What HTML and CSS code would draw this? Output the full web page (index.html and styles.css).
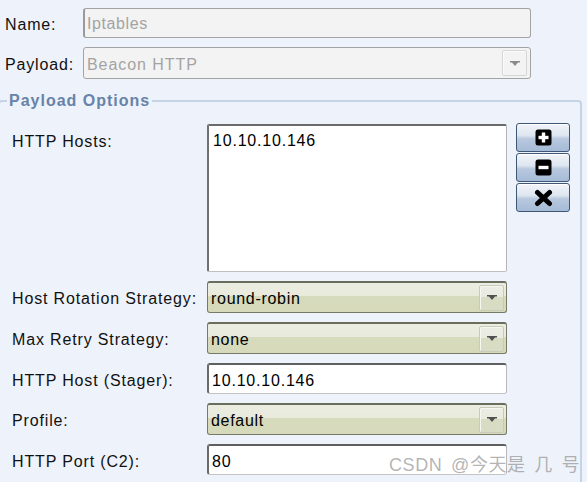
FILE: index.html
```html
<!DOCTYPE html>
<html>
<head>
<meta charset="utf-8">
<link rel="stylesheet" href="styles.css">
</head>
<body>
<div class="top">
  <div class="lbl">Name:</div>
  <div class="field field-off">Iptables</div>
  <div class="lbl">Payload:</div>
  <div class="combo combo-off">
    <span class="val">Beacon HTTP</span>
    <span class="drop"><svg class="arrow" width="10" height="5" viewBox="0 0 10 5"><path d="M0 0h10v1.5H0z M2 1.5h6L5 5z"/></svg></span>
  </div>
</div>
<fieldset class="opts">
  <legend>Payload Options</legend>
  <div class="grid">
    <div class="lbl lbl-top">HTTP Hosts:</div>
    <div class="list">10.10.10.146</div>
    <div class="btns">
      <div class="btn"><svg width="17" height="17" viewBox="0 0 17 17"><rect x="0.5" y="0.5" width="16" height="16" rx="2.5" fill="#000"/><rect x="6.8" y="3.5" width="3.4" height="10" fill="#fff"/><rect x="3.5" y="6.8" width="10" height="3.4" fill="#fff"/></svg></div>
      <div class="btn"><svg width="17" height="17" viewBox="0 0 17 17"><rect x="0.5" y="0.5" width="16" height="16" rx="2.5" fill="#000"/><rect x="3.5" y="6.8" width="10" height="3.4" fill="#fff"/></svg></div>
      <div class="btn"><svg width="19" height="18" viewBox="0 0 19 18"><path d="M3.5 3.5L15.5 14.5M15.5 3.5L3.5 14.5" stroke="#000" stroke-width="5" stroke-linecap="round"/></svg></div>
    </div>

    <div class="lbl">Host Rotation Strategy:</div>
    <div class="combo">
      <span class="val">round-robin</span>
      <span class="drop"><svg class="arrow" width="10" height="5" viewBox="0 0 10 5"><path d="M0 0h10v1.5H0z M2 1.5h6L5 5z"/></svg></span>
    </div>
    <div></div>

    <div class="lbl">Max Retry Strategy:</div>
    <div class="combo">
      <span class="val">none</span>
      <span class="drop"><svg class="arrow" width="10" height="5" viewBox="0 0 10 5"><path d="M0 0h10v1.5H0z M2 1.5h6L5 5z"/></svg></span>
    </div>
    <div></div>

    <div class="lbl">HTTP Host (Stager):</div>
    <div class="field">10.10.10.146</div>
    <div></div>

    <div class="lbl">Profile:</div>
    <div class="combo">
      <span class="val">default</span>
      <span class="drop"><svg class="arrow" width="10" height="5" viewBox="0 0 10 5"><path d="M0 0h10v1.5H0z M2 1.5h6L5 5z"/></svg></span>
    </div>
    <div></div>

    <div class="lbl">HTTP Port (C2):</div>
    <div class="field">80</div>
    <div></div>
  </div>
</fieldset>
<div class="watermark">CSDN @今天是 几 号</div>
</body>
</html>
```

FILE: styles.css
```css
html, body {
  margin: 0;
  padding: 0;
  overflow: hidden;
  height: 100%;
}
body {
  background: #eef2fa;
  font-family: "Liberation Sans", Arial, sans-serif;
  font-size: 16px;
  color: #111;
  position: relative;
}
.top {
  display: grid;
  grid-template-columns: 78px 448px;
  row-gap: 9px;
  align-items: center;
  padding: 8px 0 0 5px;
}
.lbl {
  letter-spacing: 0.85px;
  line-height: 20px;
  padding-top: 4px;
  white-space: nowrap;
}
.field {
  box-sizing: border-box;
  height: 31px;
  background: #fff;
  border-top: 2px solid #5f5f5f;
  border-left: 2px solid #6a6a6a;
  border-right: 1px solid #b8b8b8;
  border-bottom: 1px solid #c4c4c4;
  border-radius: 3px;
  padding: 2px 4px 0 3px;
  line-height: 27px;
  letter-spacing: 0.8px;
  color: #000;
}
.field-off {
  height: 30px;
  background: #f3f3f3;
  border: 1px solid #a3a3a3;
  border-left: 2px solid #9a9a9a;
  color: #a3a3a3;
  padding: 2px 2px 0 2px;
  line-height: 26px;
  letter-spacing: 0.6px;
}
.combo {
  box-sizing: border-box;
  height: 32px;
  display: flex;
  align-items: center;
  justify-content: space-between;
  border: 1px solid #777a66;
  border-top: 2px solid #6a6d5c;
  border-radius: 3px;
  background: linear-gradient(#ecede2 0, #e8eadc 45%, #d7dbbd 45%, #d6dabb 100%);
  padding: 0 2px 0 3px;
  letter-spacing: 0.7px;
  color: #000;
}
.combo .val {
  padding-top: 3px;
}
.combo-off {
  height: 32px;
  border: 1px solid #a3a3a3;
  background: #f3f3f3;
  color: #a3a3a3;
  letter-spacing: 0.95px;
  padding-left: 3px;
}
.drop {
  box-sizing: border-box;
  width: 25px;
  height: 26px;
  border: 1px solid #c9cbb9;
  border-radius: 2px;
  background: linear-gradient(#ecede3 0, #e9ebdf 45%, #d8dcc2 45%, #d9dcc4 100%);
  display: flex;
  align-items: center;
  justify-content: center;
  box-shadow: inset 1px 1px 0 #f6f7f0;
}
.combo-off .drop {
  margin-right: 1px;
  background: #f3f3f3;
  border-color: #d6d6d6;
  box-shadow: inset 1px 1px 0 #fbfbfb;
}
.arrow { fill: #505050; display: block; }
.combo-off .arrow { fill: #8a8a8a; }

.opts {
  margin: 13px 5px 0 -2px;
  border: 2px solid #c5d3e6;
  border-radius: 4px;
  padding: 14px 0 40px 12px;
  min-width: 0;
}
.opts legend {
  margin-left: -5px;
  padding: 0 2px;
  font-weight: bold;
  color: #6883a9;
  letter-spacing: 1px;
  line-height: 18px;
}
.grid {
  display: grid;
  grid-template-columns: 186px 300px 54px;
  column-gap: 9px;
  row-gap: 9px;
  align-items: center;
}
.lbl-top {
  align-self: start;
  padding-top: 8px;
}
.list {
  box-sizing: border-box;
  height: 148px;
  background: #fff;
  border-top: 2px solid #6b6b6b;
  border-left: 2px solid #707070;
  border-right: 1px solid #b5b5b5;
  border-bottom: 1px solid #c0c0c0;
  border-radius: 2px;
  padding: 5px 4px;
  line-height: 20px;
  letter-spacing: 0.8px;
  color: #000;
}
.btns {
  align-self: start;
  display: flex;
  flex-direction: column;
  gap: 1px;
  margin-top: -1px;
}
.btn {
  box-sizing: border-box;
  height: 29px;
  border: 1px solid #3f5675;
  border-radius: 3px;
  background: linear-gradient(#f1f4f9 0, #dfe6f0 42%, #b8c8de 55%, #a6bbd7 100%);
  box-shadow: inset 0 1px 0 #fff;
  display: flex;
  align-items: center;
  justify-content: center;
}
.btn svg { display: block; }
.watermark {
  position: absolute;
  left: 389px;
  top: 450px;
  font-family: "Liberation Sans", "Noto Sans CJK SC", sans-serif;
  font-size: 18px;
  letter-spacing: 0.6px;
  word-spacing: 3px;
  color: rgba(130, 130, 130, 0.6);
  white-space: nowrap;
}
```
